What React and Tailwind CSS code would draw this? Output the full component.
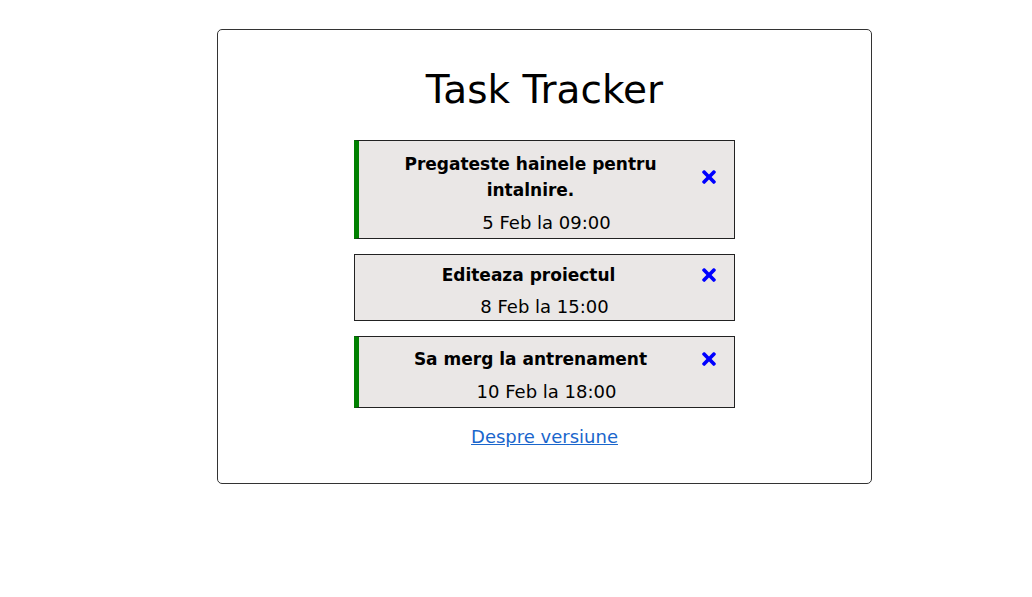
import React from "react";
import { FaTimes } from "react-icons/fa";

const tasks = [
  { text: "Pregateste hainele pentru intalnire.", day: "5 Feb la 09:00", reminder: true, pad: "pt-[10px] pb-[2px]" },
  { text: "Editeaza proiectul", day: "8 Feb la 15:00", reminder: false, pad: "pt-[7px] pb-[0px]" },
  { text: "Sa merg la antrenament", day: "10 Feb la 18:00", reminder: true, pad: "pt-[9px] pb-[2px]" },
];

function Task({ task }) {
  return (
    <div
      className={
        "bg-[#eae7e6] border border-[#222] text-center " +
        task.pad +
        (task.reminder ? " border-l-[5px] border-l-[#008000]" : "")
      }
    >
      <div className="flex items-center pr-[18px]">
        <h3 className="flex-1 text-[17px] font-bold leading-[26px] px-[36px]">{task.text}</h3>
        <FaTimes className="text-[#0000ff] w-[14px] h-[20px]" />
      </div>
      <p className={"text-[18px] leading-[26px] " + (task.reminder ? "mt-[7px]" : "mt-[6px]")}>{task.day}</p>
    </div>
  );
}

export default function App() {
  return (
    <div className="bg-white min-h-[597px] pt-[29px] text-black" style={{ fontFamily: '"DejaVu Sans", sans-serif' }}>
      <div className="ml-[217px] w-[655px] h-[455px] border border-[#333] rounded-[5px] flex flex-col items-center">
        <h1 className="text-[39px] font-normal leading-[44px] mt-[38px]">Task Tracker</h1>
        <div className="w-[381px] mt-[28px] flex flex-col gap-[15px]">
          {tasks.map((t, i) => (
            <Task key={i} task={t} />
          ))}
        </div>
        <a href="#" className="mt-[16px] text-[18px] text-[#1a66cc] underline leading-[26px]">
          Despre versiune
        </a>
      </div>
    </div>
  );
}
